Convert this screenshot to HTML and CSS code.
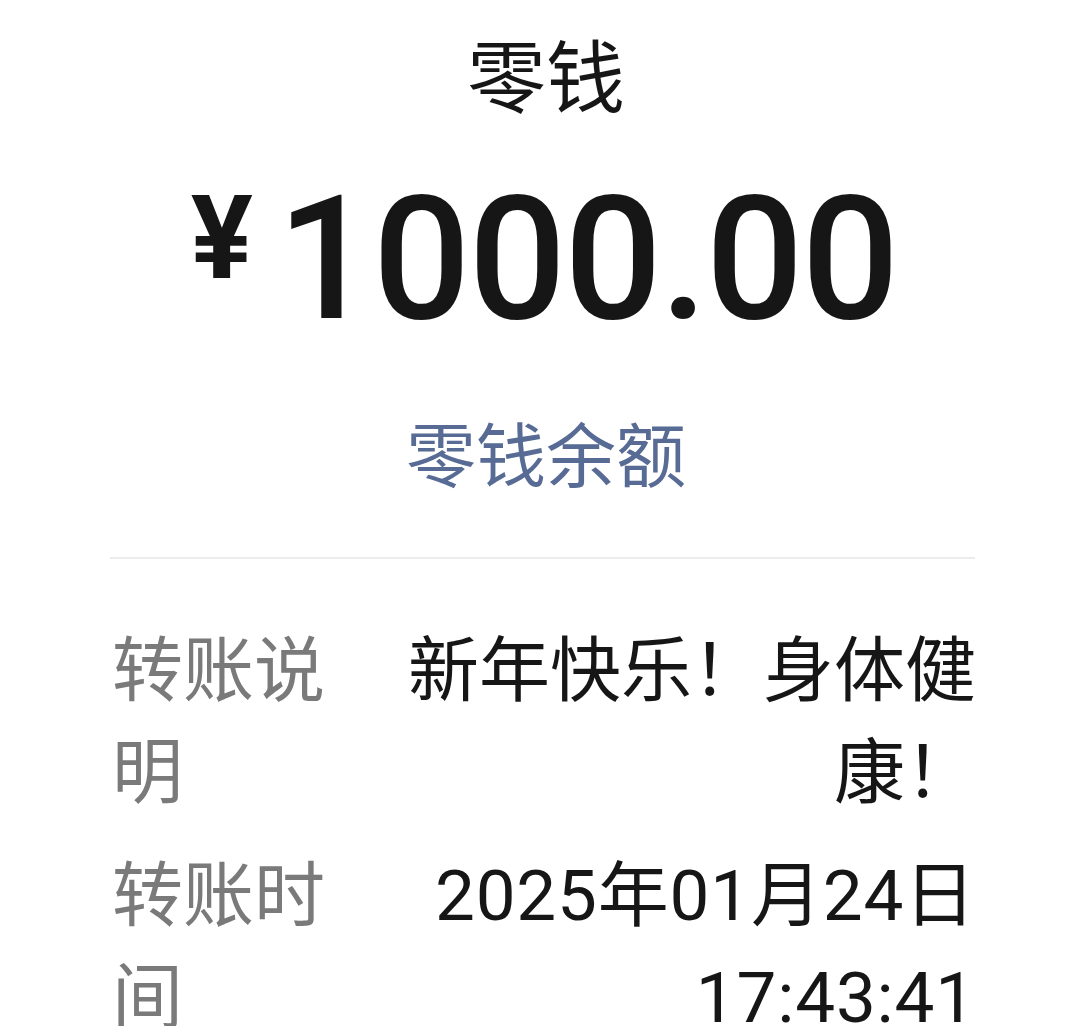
FILE: index.html
```html
<!DOCTYPE html>
<html lang="zh-CN">
<head>
    <meta charset="UTF-8">
    <meta name="viewport" content="width=device-width, initial-scale=1.0">
    <title>零钱</title>
    <link rel="stylesheet" href="styles.css">
</head>
<body>

<div class="page">
    <div class="summary">
        <div class="title">零钱</div>
        <div class="amount">
            <span class="currency">¥</span>
            <span class="num">1000.00</span>
        </div>
        <div class="balanceLink">零钱余额</div>
    </div>

    <div class="divider"></div>

    <!-- transfer details -->
    <div class="details">
        <div class="row">
            <div class="label">转账说明</div>
            <div class="value">新年快乐！身体健康！</div>
        </div>
        <div class="row">
            <div class="label">转账时间</div>
            <div class="value"><span class="digits">2025年01月24日</span> <span class="digits">17:43:41</span></div>
        </div>
    </div>
</div>

</body>
</html>
```

FILE: styles.css
```css
body {
    margin: 0;
    background: #fff;
    color: #161616;
    font-family: Roboto, "Noto Sans CJK SC", sans-serif;
}

.page {
    width: 1080px;
    height: 1026px;
    overflow: hidden;
}

.summary {
    display: flex;
    flex-direction: column;
    align-items: center;
    padding-top: 35px;
    padding-left: 12px;
}

.title {
    font-size: 79px;
    line-height: 90px;
}

.amount {
    display: flex;
    align-items: flex-start;
    margin-top: 48px;
    margin-left: -4px;
}

.currency {
    font-size: 116px;
    font-weight: 700;
    line-height: 1;
    margin-top: 7px;
    margin-right: 24px;
}

.num {
    font-size: 172px;
    font-weight: 500;
    line-height: 1;
    letter-spacing: -2px;
}

.balanceLink {
    font-size: 70px;
    line-height: 1;
    color: #576b95;
    margin-top: 78px;
}

.divider {
    height: 2px;
    background-color: #ececec;
    margin: 64px 105px 0 110px;
}

.details {
    padding: 61px 104px 0 112px;
    display: flex;
    flex-direction: column;
    gap: 21px;
}

.row {
    display: flex;
    font-size: 71px;
    line-height: 102px;
}

.label {
    width: 215px;
    flex-shrink: 0;
    color: #7a7a7a;
}

.value {
    flex: 1;
    margin-left: 76px;
    text-align: right;
    color: #161616;
}

.digits {
    letter-spacing: 0.8px;
}
```
